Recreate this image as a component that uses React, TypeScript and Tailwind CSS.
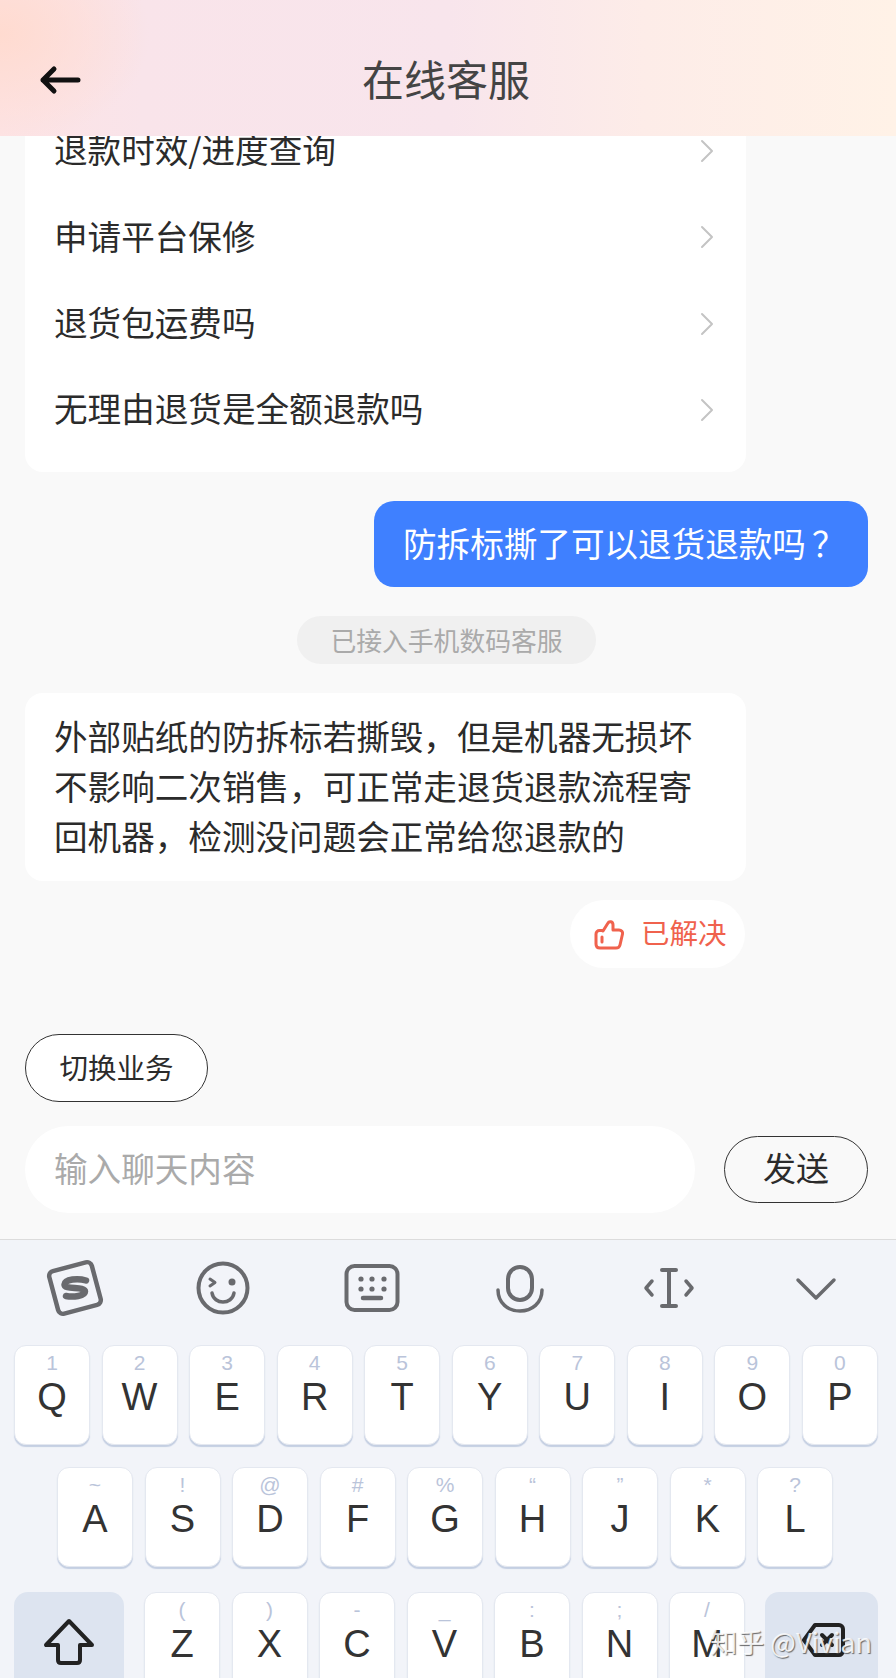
const FONT = "font-['Noto_Sans_CJK_SC','Noto_Sans',sans-serif]";

const questions = ['退款时效/进度查询', '申请平台保修', '退货包运费吗', '无理由退货是全额退款吗'];

const row1 = [['Q', '1'], ['W', '2'], ['E', '3'], ['R', '4'], ['T', '5'], ['Y', '6'], ['U', '7'], ['I', '8'], ['O', '9'], ['P', '0']];
const row2 = [['A', '~'], ['S', '!'], ['D', '@'], ['F', '#'], ['G', '%'], ['H', '“'], ['J', '”'], ['K', '*'], ['L', '?']];
const row3 = [['Z', '('], ['X', ')'], ['C', '-'], ['V', '_'], ['B', ':'], ['N', ';'], ['M', '/']];

function Key({ label, sub }: { label: string; sub: string }) {
    return (
        <div className="w-[76px] h-[100px] shrink-0 rounded-[12px] bg-white border border-[#e4e8f0] shadow-[0_2px_1px_#c4cfe2] flex flex-col items-center pt-[5px] font-['Liberation_Sans',sans-serif]">
            <span className="h-[24px] leading-[24px] text-[21px] text-[#bac4da]">{sub}</span>
            <span className="h-[44px] leading-[44px] text-[38px] text-[#333333]">{label}</span>
        </div>
    );
}

function Chevron() {
    return (
        <svg width="14" height="24" viewBox="0 0 14 24" fill="none" stroke="#c4c4c4" strokeWidth="2" strokeLinecap="round" strokeLinejoin="round">
            <path d="M2 2l10 10L2 22" />
        </svg>
    );
}

function ToolbarIcons() {
    return (
        <div className="h-[105px] shrink-0 flex items-start justify-between pl-[45px] pr-[50px] pt-[17px] text-[#696a6e]">
            <svg width="60" height="60" viewBox="0 0 60 60" fill="none" stroke="currentColor" strokeLinecap="round" strokeLinejoin="round">
                <rect x="8" y="9" width="44" height="44" rx="5" strokeWidth="4.500" transform="rotate(-15 30 31)" />
                <path d="M41 23.500C33 21 20 22 19.500 27.500C19 33 40 29 40 34.500C40 39 28 40.500 21 39" strokeWidth="6.500" />
            </svg>
            <svg width="60" height="60" viewBox="0 0 60 60" fill="none" stroke="currentColor" strokeLinecap="round" strokeLinejoin="round">
                <circle cx="30" cy="31" r="24.500" strokeWidth="4" />
                <path d="M17 22l5 3.500l-5 3.500" strokeWidth="3" />
                <circle cx="39" cy="25" r="3.500" fill="currentColor" stroke="none" />
                <path d="M19 36c2 12 20 12 22 0" strokeWidth="3.500" />
            </svg>
            <svg width="60" height="60" viewBox="0 0 60 60" fill="none" stroke="currentColor" strokeLinecap="round" strokeLinejoin="round">
                <rect x="5.500" y="9" width="51" height="44" rx="8" strokeWidth="4" />
                <circle cx="20" cy="22" r="2.600" fill="currentColor" stroke="none" />
                <circle cx="31" cy="22" r="2.600" fill="currentColor" stroke="none" />
                <circle cx="43" cy="22" r="2.600" fill="currentColor" stroke="none" />
                <circle cx="20" cy="32" r="2.600" fill="currentColor" stroke="none" />
                <circle cx="31" cy="32" r="2.600" fill="currentColor" stroke="none" />
                <circle cx="43" cy="32" r="2.600" fill="currentColor" stroke="none" />
                <path d="M22 41h18" strokeWidth="4.500" />
            </svg>
            <svg width="60" height="60" viewBox="0 0 60 60" fill="none" stroke="currentColor" strokeLinecap="round" strokeLinejoin="round">
                <rect x="18" y="10" width="24" height="33" rx="12" strokeWidth="4" />
                <path d="M8 33c0 13 10 21 22 21s22-8 22-21" strokeWidth="3.500" />
            </svg>
            <svg width="60" height="60" viewBox="0 0 60 60" fill="none" stroke="currentColor" strokeLinecap="round" strokeLinejoin="round">
                <path d="M31 13v36M24 13h14M24 49h14" strokeWidth="4" />
                <path d="M14 24l-6 7l6 7M48 24l6 7l-6 7" strokeWidth="3.500" />
            </svg>
            <svg width="60" height="60" viewBox="0 0 60 60" fill="none" stroke="currentColor" strokeLinecap="round" strokeLinejoin="round">
                <path d="M12 23l18 18l18-18" strokeWidth="3.500" />
            </svg>
        </div>
    );
}

export default function App() {
    return (
        <div className={`${FONT} w-[896px] h-[1678px] relative overflow-hidden bg-[#f9f9f9] flex flex-col`}>
            <header className="h-[136px] shrink-0 relative z-10 flex items-end pb-[28px] bg-[radial-gradient(150px_110px_at_0%_25%,#ffdbd0_0%,#ffdbd000_100%),linear-gradient(90deg,#fde3e4_0%,#f9e4ea_16%,#f8e5ec_50%,#fdece8_72%,#fff2e7_100%)]">
                <svg className="absolute left-[38px] top-[60px]" width="44" height="40" viewBox="0 0 44 40" fill="none" stroke="#111111" strokeWidth="5" strokeLinecap="round" strokeLinejoin="round">
                    <path d="M40 20H5M16 9L5 20l11 11" />
                </svg>
                <h1 className="w-full text-center text-[42px] leading-[60px] font-normal text-[#444444] mr-[4px]">在线客服</h1>
            </header>

            <main className="flex-1 min-h-0 px-[25px] text-[#2b2b2b]">
                <div className="-mt-[28px] w-[721px] rounded-[18px] bg-white pb-[19px]">
                    {questions.map((q) => (
                        <div key={q} className="h-[86.3px] pl-[29px] pr-[32px] flex items-center justify-between text-[33.6px]">
                            <span className="pb-[3px]">{q}</span>
                            <Chevron />
                        </div>
                    ))}
                </div>

                <div className="flex justify-end mt-[29px]">
                    <div className="h-[86px] w-[494px] mr-[3px] pb-[2px] rounded-[20px] bg-[#3f80ff] text-white text-[33.6px] flex items-center pl-[29px] whitespace-nowrap">
                        防拆标撕了可以退货退款吗<span className="ml-[6px]">？</span>
                    </div>
                </div>

                <div className="flex justify-center mt-[29px]">
                    <div className="h-[48px] px-[33px] mr-[3px] rounded-full bg-[#f0f0f0] text-[#aaaaaa] text-[25.8px] flex items-center">
                        已接入手机数码客服
                    </div>
                </div>

                <div className="mt-[29px] w-[721px] rounded-[18px] bg-white px-[29px] pt-[18px] pb-[20px] text-[33.6px] leading-[50px]">
                    外部贴纸的防拆标若撕毁，但是机器无损坏不影响二次销售，可正常走退货退款流程寄回机器，检测没问题会正常给您退款的
                </div>

                <div className="w-[721px] flex justify-end mt-[19px]">
                    <div className="h-[68px] w-[175px] mr-[1px] rounded-full bg-white flex items-center pl-[24px] gap-[17px] text-[#f0624d] text-[28.5px]">
                        <svg width="30" height="32" viewBox="0 0 30 32" fill="none" stroke="currentColor" strokeWidth="3" strokeLinecap="round" strokeLinejoin="round">
                            <path d="M9 13l5-8c1-2 5-2 5 2v5h6c2.500 0 4 2 3.500 4l-2.500 11c-.5 2-2 3-4 3H6c-2.500 0-4-1.500-4-4V16c0-2 1.500-3.500 3.500-3.500H9z" />
                            <path d="M8 19v5" />
                        </svg>
                        <span className="pb-[3px]">已解决</span>
                    </div>
                </div>

                <button className="block mt-[66px] h-[68px] w-[183px] pb-[2px] rounded-full border border-[#333333] bg-white text-[28.5px] text-[#2b2b2b]">
                    切换业务
                </button>

                <div className="flex items-center justify-between mt-[24px] mr-[3px] mb-[26px]">
                    <div className="h-[87px] w-[670px] pb-[3px] rounded-full bg-white pl-[29px] flex items-center text-[33.6px] text-[#aaaaaa]">
                        输入聊天内容
                    </div>
                    <button className="h-[67px] w-[144px] pb-[3px] rounded-full border border-[#333333] text-[33px] text-[#2b2b2b]">
                        发送
                    </button>
                </div>
            </main>

            <section className="h-[439px] shrink-0 border-t border-[#dcdcdc] bg-[#f2f4f9] flex flex-col">
                <ToolbarIcons />
                <div className="flex justify-between pl-[14px] pr-[18px]">
                    {row1.map(([l, s]) => <Key key={l} label={l} sub={s} />)}
                </div>
                <div className="flex justify-between pl-[57px] pr-[63px] mt-[22px]">
                    {row2.map(([l, s]) => <Key key={l} label={l} sub={s} />)}
                </div>
                <div className="flex justify-between pl-[14px] pr-[18px] mt-[25px]">
                    <div className="w-[110px] h-[100px] shrink-0 rounded-[14px] bg-[#dde4f0] flex justify-center pt-[26px]">
                        <svg width="52" height="50" viewBox="0 0 52 50" fill="none" stroke="#222222" strokeWidth="4" strokeLinejoin="round">
                            <path d="M26 3L3 27h12v15c0 2 1 3 3 3h16c2 0 3-1 3-3V27h12z" />
                        </svg>
                    </div>
                    <div className="w-[601px] flex justify-between">
                        {row3.map(([l, s]) => <Key key={l} label={l} sub={s} />)}
                    </div>
                    <div className="w-[113px] h-[100px] shrink-0 rounded-[14px] bg-[#dde4f0] flex justify-center pt-[30px] pl-[4px]">
                        <svg width="44" height="36" viewBox="0 0 44 36" fill="none" stroke="#222222" strokeWidth="4" strokeLinejoin="round" strokeLinecap="round">
                            <path d="M13 3h24c2 0 4 2 4 4v22c0 2-2 4-4 4H13L2 18z" />
                            <path d="M20 13l10 10M30 13L20 23" />
                        </svg>
                    </div>
                </div>
            </section>

            <div className="absolute right-[24px] bottom-[18px] z-20 text-[27px] leading-[36px] text-white/85 [text-shadow:1px_1px_1px_rgba(70,70,70,0.8)]">
                知乎 @Vivian
            </div>
        </div>
    );
}
